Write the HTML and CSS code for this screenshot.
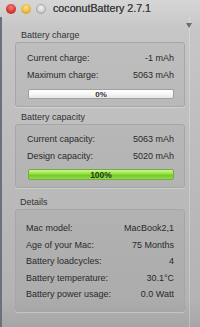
FILE: index.html
```html
<!DOCTYPE html>
<html>
<head>
<meta charset="utf-8">
<link rel="stylesheet" href="styles.css">
</head>
<body>
<div class="window">
  <div class="titlebar">
    <span class="light red"></span>
    <span class="light yellow"></span>
    <span class="light gray"></span>
    <span class="title">coconutBattery 2.7.1</span>
  </div>
  <div class="body">
    <div class="main">
      <div class="toolbar"><span class="tri"></span></div>

      <div class="label">Battery charge</div>
      <div class="box box1">
        <div class="row"><span>Current charge:</span><span>-1 mAh</span></div>
        <div class="row"><span>Maximum charge:</span><span>5063 mAh</span></div>
        <div class="bar white"><span>0%</span></div>
      </div>

      <div class="label l2">Battery capacity</div>
      <div class="box box2">
        <div class="row"><span>Current capacity:</span><span>5063 mAh</span></div>
        <div class="row"><span>Design capacity:</span><span>5020 mAh</span></div>
        <div class="bar green"><span>100%</span></div>
      </div>

      <div class="label l3">Details</div>
      <div class="box box3">
        <div class="row r3"><span>Mac model:</span><span>MacBook2,1</span></div>
        <div class="row r3"><span>Age of your Mac:</span><span>75 Months</span></div>
        <div class="row r3"><span>Battery loadcycles:</span><span>4</span></div>
        <div class="row r3"><span>Battery temperature:</span><span>30.1°C</span></div>
        <div class="row r3"><span>Battery power usage:</span><span>0.0 Watt</span></div>
      </div>
    </div>
  </div>
</div>
</body>
</html>
```
FILE: styles.css
```css
html, body {
  margin: 0;
  padding: 0;
}
body {
  width: 200px;
  height: 327px;
  overflow: hidden;
  font-family: "Liberation Sans", Arial, sans-serif;
  color: #2a2a2a;
}
.window {
  width: 200px;
  height: 327px;
  background: linear-gradient(to bottom, #d6d6d6 0px, #c6c6c6 30px, #bcbcbc 160px, #b3b3b3 300px, #a6a6a6 327px);
  display: flex;
  flex-direction: column;
}
.titlebar {
  height: 17px;
  display: flex;
  align-items: center;
  padding-left: 6px;
  gap: 5px;
}
.light {
  width: 10px;
  height: 10px;
  border-radius: 50%;
  box-sizing: border-box;
}
.red {
  background: radial-gradient(circle at 50% 35%, #f3807a 0, #d83a35 55%, #a8231f 100%);
}
.yellow {
  background: radial-gradient(circle at 50% 35%, #fde39a 0, #eab73a 55%, #c08a1c 100%);
}
.gray {
  background: radial-gradient(circle at 50% 35%, #f4f4f4 0, #cfcfcf 60%, #a9a9a9 100%);
  border: 1px solid #a8a8a8;
}
.title {
  margin-left: 2px;
  font-size: 10.7px;
  color: #404040;
  line-height: 17px;
  text-shadow: 0 0 0.4px #404040;
}
.body {
  flex: 1;
  display: flex;
  box-shadow: inset 2px 0 0 #6a717a;
}
.main {
  width: 190px;
  box-sizing: border-box;
  border-right: 1px solid rgba(255,255,255,0.25);
  display: flex;
  flex-direction: column;
}
.toolbar {
  height: 12px;
  display: flex;
  justify-content: flex-end;
  align-items: flex-start;
}
.tri {
  width: 0;
  height: 0;
  border-left: 3px solid transparent;
  border-right: 3px solid transparent;
  border-top: 5px solid #6c6c6c;
  margin-top: 6px;
  margin-right: -3px;
}
.label {
  height: 13px;
  line-height: 13px;
  font-size: 9px;
  padding-left: 21px;
  color: #333;
}
.l2 {
  margin-top: 4px;
}
.l3 {
  margin-top: 8px;
  padding-left: 20px;
}
.box {
  margin-left: 15px;
  margin-right: 4px;
  box-sizing: border-box;
  border: 1px solid #a6a6a6;
  border-radius: 3px;
  background: rgba(0,0,0,0.035);
  box-shadow: 0 1px 0 rgba(255,255,255,0.3);
  padding: 0 10px 0 11px;
}
.box1 {
  height: 65px;
  padding-top: 7px;
}
.box2 {
  height: 64px;
  padding-top: 6px;
}
.box3 {
  height: 103px;
  padding-top: 10px;
  padding-left: 10px;
}
.row {
  height: 17px;
  line-height: 17px;
  font-size: 9px;
  display: flex;
  justify-content: space-between;
}
.r3 {
  height: 16.6px;
  line-height: 16.6px;
}
.bar {
  margin: 5px 0 0 1px;
  height: 10px;
  box-sizing: border-box;
  border-radius: 2px;
  display: flex;
  align-items: center;
  justify-content: center;
  font-size: 8px;
  font-weight: bold;
  color: #333;
}
.white {
  border: 1px solid #a0a0a0;
  background: linear-gradient(to bottom, #ffffff 0, #f6f6f6 50%, #e8e8e8 100%);
}
.green {
  margin-top: 4px;
  height: 11px;
  border: 1px solid #79a84a;
  background: linear-gradient(to bottom, #c8f78e 0, #94e440 45%, #74c826 55%, #8edd4a 100%);
  color: #1f3a0c;
  font-size: 8.5px;
}
```
